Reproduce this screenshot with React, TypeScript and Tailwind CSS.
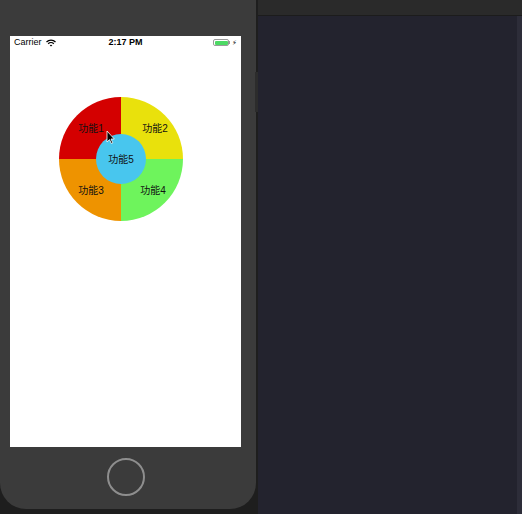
const font = { fontFamily: '"Liberation Sans", "Noto Sans CJK SC", sans-serif' };

function StatusBar() {
  return (
    <div className="relative flex h-[13px] items-center px-[4px] text-[9px] text-black">
      <span>Carrier</span>
      <svg className="ml-[4px]" width="10" height="8" viewBox="0 0 10 8">
        <path d="M0.5 3 A6.5 6.5 0 0 1 9.5 3" stroke="#000" strokeWidth="1.3" fill="none" />
        <path d="M2.2 4.8 A4 4 0 0 1 7.8 4.8" stroke="#000" strokeWidth="1.3" fill="none" />
        <path d="M5 7.6 L3.7 6.3 A1.9 1.9 0 0 1 6.3 6.3 Z" fill="#000" />
      </svg>
      <span className="absolute left-0 right-0 text-center font-bold">2:17 PM</span>
      <div className="ml-auto flex items-center">
        <div className="flex h-[7px] w-[16px] items-center rounded-[2px] border border-[#9a9a9a] p-[0.5px]">
          <div className="h-full w-full rounded-[1px] bg-[#4cd964]" />
        </div>
        <div className="h-[3px] w-[1px] bg-[#9a9a9a]" />
        <span className="ml-[2px] text-[7px] leading-none">⚡︎</span>
      </div>
    </div>
  );
}

function Wheel() {
  const cx = 111;
  const cy = 110;
  const r = 62;
  return (
    <svg width="231" height="190" className="block">
      <path d={`M${cx} ${cy} L${cx} ${cy - r} A${r} ${r} 0 0 0 ${cx - r} ${cy} Z`} fill="#d40000" />
      <path d={`M${cx} ${cy} L${cx + r} ${cy} A${r} ${r} 0 0 0 ${cx} ${cy - r} Z`} fill="#e9e10c" />
      <path d={`M${cx} ${cy} L${cx - r} ${cy} A${r} ${r} 0 0 0 ${cx} ${cy + r} Z`} fill="#ee9300" />
      <path d={`M${cx} ${cy} L${cx} ${cy + r} A${r} ${r} 0 0 0 ${cx + r} ${cy} Z`} fill="#6ef45c" />
      <circle cx={cx} cy={cy} r="25" fill="#48c6ee" />
      <g fontSize="10" fill="#111" textAnchor="middle" style={font}>
        <text x="81" y="83">功能1</text>
        <text x="145" y="83">功能2</text>
        <text x="81" y="145">功能3</text>
        <text x="143" y="145">功能4</text>
        <text x="111" y="114">功能5</text>
      </g>
      {/* mouse pointer */}
      <path d="M97 82 L97 93 L99.5 90.6 L101.3 94.5 L102.8 93.8 L101 90 L104.3 90 Z" fill="#000" stroke="#fff" strokeWidth="0.8" />
    </svg>
  );
}

export default function App() {
  return (
    <div className="flex h-[514px] w-[522px] overflow-hidden bg-[#1e1e1e]" style={font}>
      {/* simulator device */}
      <div className="relative w-[258px]">
        <div className="flex h-[509px] w-[256px] flex-col items-start rounded-b-[26px] bg-[#3b3b3b] pl-[10px] pt-[36px]">
          <div className="h-[411px] w-[231px] bg-white">
            <StatusBar />
            <Wheel />
          </div>
          <div className="flex w-[231px] justify-center pt-[11px]">
            <div className="h-[38px] w-[38px] rounded-full border-2 border-[#8e8e8e]" />
          </div>
        </div>
        <div className="absolute left-[255px] top-[72px] h-[40px] w-[3px] bg-[#2c2c2c]" />
      </div>

      {/* right pane */}
      <div className="flex flex-1 flex-col">
        <div className="h-[16px] border-b border-[#1c1c1c] bg-[#2a2a2a]" />
        <div className="flex flex-1">
          <div className="flex-1 bg-[#23232e]" />
          <div className="w-[5px] bg-[#2d2d39]" />
        </div>
      </div>
    </div>
  );
}
